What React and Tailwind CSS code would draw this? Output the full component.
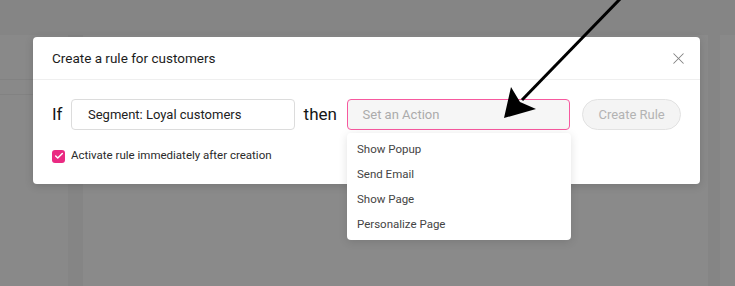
import React from "react";
import { X, Check } from "lucide-react";

const actions = ["Show Popup", "Send Email", "Show Page", "Personalize Page"];

const App = () => {
  return (
    <div
      className="relative w-[735px] h-[286px] overflow-hidden bg-[#898989]"
      style={{ fontFamily: "Roboto, 'Noto Sans', sans-serif" }}
    >
      {/* dimmed app behind the modal */}
      <div className="flex flex-col h-full">
        <div className="h-[35px] bg-[#858585]" />
        <div className="flex flex-1">
          <div className="w-[68px] flex flex-col">
            <div className="h-[45px] border-b border-[#828282]" />
            <div className="h-[15px] border-b border-[#828282]" />
          </div>
          <div className="w-[15px] bg-[#858585]" />
          <div className="flex-1 bg-[#8a8a8a]" />
          <div className="w-[12px] bg-[#858585]" />
          <div className="w-[15px] bg-[#898989]" />
        </div>
      </div>

      {/* modal */}
      <div className="absolute left-[33px] top-[37px] w-[667px] h-[147px] bg-white rounded-[4px] shadow-[0_2px_8px_rgba(0,0,0,0.15)]">
        <div className="h-[43px] px-[19px] flex items-center justify-between border-b border-[#efefef]">
          <span className="text-[13.5px] text-[#1c1c1c]">Create a rule for customers</span>
          <X className="w-[19px] h-[19px] text-[#808080] mr-[-7px]" strokeWidth={1.3} />
        </div>
        <div className="pt-[19px] px-[19px]">
          <div className="flex items-center">
            <span className="text-[17px] text-[#151515] w-[19px]">If</span>
            <div className="w-[224px] h-[31px] border border-[#dcdcdc] rounded-[4px] flex items-center pl-[16px] text-[13px] text-[#222]">
              Segment: Loyal customers
            </div>
            <span className="text-[17px] text-[#151515] ml-[9px] w-[43px]">then</span>
            <div className="w-[224px] h-[31px] border-[1.5px] border-[#f7599f] rounded-[4px] bg-[#f6f6f6] flex items-center pl-[15px] text-[13px] text-[#ababab]">
              Set an Action
            </div>
            <div className="ml-[12px] w-[99px] h-[31px] rounded-full border border-[#e2e2e2] bg-[#f4f4f4] flex items-center justify-center text-[13px] text-[#b3b3b3]">
              Create Rule
            </div>
          </div>
          <div className="mt-[19px] h-[14px] flex items-center">
            <div className="w-[13px] h-[13px] rounded-[3px] bg-[#ea2a82] flex items-center justify-center">
              <Check className="w-[10px] h-[10px] text-white" strokeWidth={3.5} />
            </div>
            <span className="ml-[6px] text-[11.5px] text-[#2a2a2a]">
              Activate rule immediately after creation
            </span>
          </div>
        </div>
      </div>

      {/* dropdown */}
      <div className="absolute left-[347px] top-[133px] w-[224px] h-[107px] py-[4px] bg-white rounded-[4px] shadow-[0_2px_10px_rgba(0,0,0,0.12)]">
        {actions.map((a) => (
          <div key={a} className="h-[25px] flex items-center pl-[10px] text-[11.5px] text-[#444]">
            {a}
          </div>
        ))}
      </div>

      {/* arrow annotation */}
      <svg className="absolute left-0 top-0" width="735" height="286" viewBox="0 0 735 286">
        <line x1="621" y1="-2" x2="522" y2="100" stroke="#000" strokeWidth="3" />
        <polygon points="504,118 511,87 520,102 536,109" fill="#000" />
      </svg>
    </div>
  );
};

export default App;
